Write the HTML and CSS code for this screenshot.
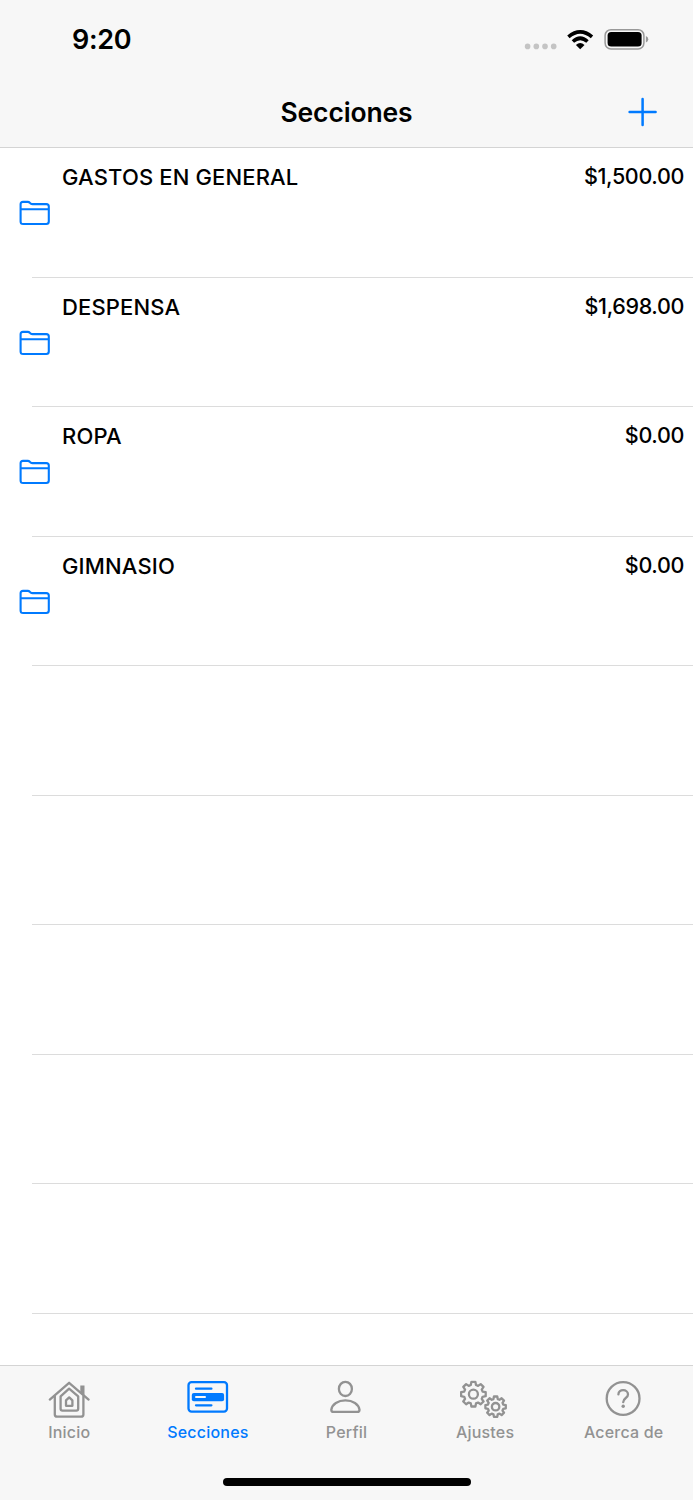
FILE: index.html
```
<!DOCTYPE html>
<html lang="es">
  <head>
    <meta charset="UTF-8" />
    <meta name="viewport" content="width=device-width, initial-scale=1.0" />
    <title>Secciones</title>
    <link rel="stylesheet" href="styles.css">
  </head>
  <body>
    <!-- Shared icons -->
    <svg class="icon-defs" width="0" height="0">
      <symbol id="folder" viewBox="0 0 32 26">
        <path d="M1.6 21.5V4.3Q1.6 1.9 4 1.9H8.8Q10 1.9 10.8 2.7L11.8 3.6Q12.5 4.1 13.5 4.1H27.3Q29.8 4.1 29.8 6.6V21.5Q29.8 24 27.3 24H4.1Q1.6 24 1.6 21.5ZM1.6 9.3H29.8" />
      </symbol>
      <symbol id="gear" viewBox="-14 -14 28 28">
        <path d="M-2.6-9.2L-2-12.3H2L2.6-9.2L4.67-8.34L7.28-10.11L10.11-7.28L8.34-4.67L9.2-2.6L12.3-2V2L9.2 2.6L8.34 4.67L10.11 7.28L7.28 10.11L4.67 8.34L2.6 9.2L2 12.3H-2L-2.6 9.2L-4.67 8.34L-7.28 10.11L-10.11 7.28L-8.34 4.67L-9.2 2.6L-12.3 2V-2L-9.2-2.6L-8.34-4.67L-10.11-7.28L-7.28-10.11L-4.67-8.34Z" />
        <circle r="4.5" />
      </symbol>
    </svg>

    <div class="screen">
      <header class="top-bar">
        <div class="status-bar">
          <span class="time">9:20</span>
          <svg width="126" height="26" viewBox="0 0 126 26">
            <g fill="#c4c4c4">
              <circle cx="4.6" cy="20.4" r="2.8" />
              <circle cx="13.3" cy="20.4" r="2.8" />
              <circle cx="22" cy="20.4" r="2.8" />
              <circle cx="30.7" cy="20.4" r="2.8" />
            </g>
            <g fill="none" stroke="#000" stroke-width="3.6">
              <path d="M45.4 10.8Q57.2 0.8 69 10.8" />
              <path d="M49.9 15.5Q57.2 9 64.5 15.5" />
            </g>
            <path d="M57.2 23.2L52.9 18.9Q57.2 15.3 61.5 18.9Z" />
            <rect x="82.1" y="3.7" width="38.8" height="19.2" rx="5.8" fill="none" stroke="#999" stroke-width="1.5" />
            <rect x="84.6" y="6" width="34" height="14.6" rx="3.6" />
            <path d="M122.9 10Q125.3 11 125.3 13.3Q125.3 15.6 122.9 16.6Z" fill="#999" />
          </svg>
        </div>
        <div class="nav-bar">
          <h1>Secciones</h1>
          <button class="add-button" aria-label="Agregar">
            <svg width="30" height="30" viewBox="0 0 30 30">
              <path d="M14.6 2V28M1.6 14.9H27.6" />
            </svg>
          </button>
        </div>
      </header>

      <ul class="section-list">
        <li class="section-row">
          <svg class="folder"><use href="#folder" /></svg>
          <span class="section-name">GASTOS EN GENERAL</span>
          <span class="amount">$1,500.00</span>
        </li>
        <li class="section-row">
          <svg class="folder"><use href="#folder" /></svg>
          <span class="section-name">DESPENSA</span>
          <span class="amount">$1,698.00</span>
        </li>
        <li class="section-row">
          <svg class="folder"><use href="#folder" /></svg>
          <span class="section-name">ROPA</span>
          <span class="amount">$0.00</span>
        </li>
        <li class="section-row">
          <svg class="folder"><use href="#folder" /></svg>
          <span class="section-name">GIMNASIO</span>
          <span class="amount">$0.00</span>
        </li>
        <li class="section-row"></li>
        <li class="section-row"></li>
        <li class="section-row"></li>
        <li class="section-row"></li>
        <li class="section-row"></li>
      </ul>

      <footer class="bottom-bar">
        <nav class="tabs">
          <a class="tab">
            <svg width="50" height="40" viewBox="0 0 50 40">
              <path d="M5.8 21.6L25.1 4.8L44.6 21.6" stroke-linecap="round" />
              <path d="M10.8 17.6V36.4Q10.8 38.7 13.2 38.7H37Q39.4 38.7 39.4 36.4V17.6" />
              <path class="solid" d="M36.3 7.6H40.5V18L36.3 14.4Z" />
              <path d="M16.6 18.4L25.1 10.7L34.2 18.4V30.8Q34.2 32.7 32.3 32.7H18.5Q16.6 32.7 16.6 30.8Z" />
              <path d="M22 22.4L25.2 19.4L28.4 22.4V27.8H22Z" />
            </svg>
            <span>Inicio</span>
          </a>
          <a class="tab active">
            <svg width="50" height="40" viewBox="0 0 50 40">
              <rect x="5.5" y="4.2" width="38.5" height="29.4" rx="3" />
              <path d="M13 10.7H28.4M13 27.3H28.4" stroke-linecap="round" />
              <rect class="solid" x="8.8" y="15" width="32.3" height="8.3" rx="2" />
              <path class="light" d="M13 19.1H22" stroke-linecap="round" />
            </svg>
            <span>Secciones</span>
          </a>
          <a class="tab">
            <svg width="50" height="40" viewBox="0 0 50 40">
              <ellipse cx="24.4" cy="10.9" rx="6.5" ry="7.1" />
              <path d="M12.4 33.9Q10.3 33.9 10.3 31.7C11.2 26.2 16.9 22.4 24.4 22.4S37.6 26.2 38.5 31.7Q38.5 33.9 36.4 33.9Z" />
            </svg>
            <span>Perfil</span>
          </a>
          <a class="tab">
            <svg width="50" height="40" viewBox="0 0 50 40">
              <use href="#gear" x="-0.6" y="2.2" width="28" height="28" />
              <use href="#gear" x="24" y="17.1" width="23.2" height="23.2" stroke-width="2.8" />
            </svg>
            <span>Ajustes</span>
          </a>
          <a class="tab">
            <svg width="50" height="40" viewBox="0 0 50 40">
              <circle cx="24.1" cy="20.5" r="16.4" />
              <path d="M19.4 16.4C19.4 10.6 29 11 29 16.4C29 20.2 24.2 19.8 24.2 24.2" stroke-linecap="round" />
              <circle class="solid" cx="24.2" cy="28.2" r="1.7" />
            </svg>
            <span>Acerca de</span>
          </a>
        </nav>
        <div class="home-indicator"></div>
      </footer>
    </div>
  </body>
</html>
```

FILE: styles.css
```
/* General page styling */
* {
  box-sizing: border-box;
}

body {
  font-family: "Inter", sans-serif;
  background-color: #fff;
  color: #000;
  margin: 0;
}

.icon-defs {
  display: none;
}

.screen {
  display: flex;
  flex-direction: column;
  height: 1500px;
  overflow: hidden;
}

/* Status and navigation bars */
.top-bar {
  height: 148px;
  background: #f7f7f7;
  border-bottom: 1px solid #d4d4d4;
}

.status-bar {
  display: flex;
  justify-content: space-between;
  align-items: flex-start;
  height: 76px;
  padding: 26px 44px 0 72px;
}

.time {
  font-size: 27px;
  font-weight: 600;
  letter-spacing: -0.3px;
  line-height: 28px;
}

.nav-bar {
  display: grid;
  grid-template-columns: 1fr auto 1fr;
  align-items: center;
  height: 72px;
  padding-right: 35px;
  padding-left: 35px;
}

h1 {
  grid-column: 2;
  margin: 0;
  font-size: 26.5px;
  font-weight: 600;
  letter-spacing: -0.15px;
  line-height: 32px;
}

.add-button {
  justify-self: end;
  width: 30px;
  height: 30px;
  padding: 0;
  border: 0;
  background: none;
}

.add-button svg {
  display: block;
  stroke: #007aff;
  stroke-width: 2.5;
  stroke-linecap: round;
}

/* Section list */
.section-list {
  flex: 1;
  min-height: 0;
  margin: 0;
  padding: 0;
  list-style: none;
  overflow: hidden;
}

.section-row {
  display: grid;
  grid-template-columns: 43px 1fr auto;
  align-items: start;
  height: 129.55px;
  padding: 14px 9px 0 19px;
  background: linear-gradient(#dcdcdc, #dcdcdc) 32px 100% / 100% 1px no-repeat;
}

.folder {
  width: 32px;
  height: 26px;
  margin-top: 38px;
  fill: none;
  stroke: #007aff;
  stroke-width: 2.1;
  stroke-linejoin: round;
}

.section-name {
  font-size: 22px;
  font-weight: 450;
  letter-spacing: 0.15px;
  line-height: 30px;
}

.amount {
  font-size: 21.5px;
  font-weight: 500;
  letter-spacing: -0.35px;
  line-height: 28px;
}

/* Tab bar */
.bottom-bar {
  height: 135px;
  padding-top: 12px;
  background: #f7f7f7;
  border-top: 1px solid #d4d4d4;
}

.tabs {
  display: grid;
  grid-template-columns: repeat(5, 1fr);
  height: 100px;
}

.tab {
  display: flex;
  flex-direction: column;
  align-items: center;
  color: #929292;
  font-size: 16px;
  font-weight: 500;
  letter-spacing: 0.2px;
  line-height: 20px;
}

.tab svg {
  margin-bottom: 4px;
  fill: none;
  stroke: currentColor;
  stroke-width: 2.3;
  stroke-linejoin: round;
}

.tab .solid {
  fill: currentColor;
  stroke: none;
}

.tab .light {
  stroke: #f7f7f7;
  stroke-width: 2;
}

.tab.active {
  color: #007aff;
}

.home-indicator {
  width: 248px;
  height: 8px;
  margin: 0 auto;
  border-radius: 4px;
  background: #000;
}
```
